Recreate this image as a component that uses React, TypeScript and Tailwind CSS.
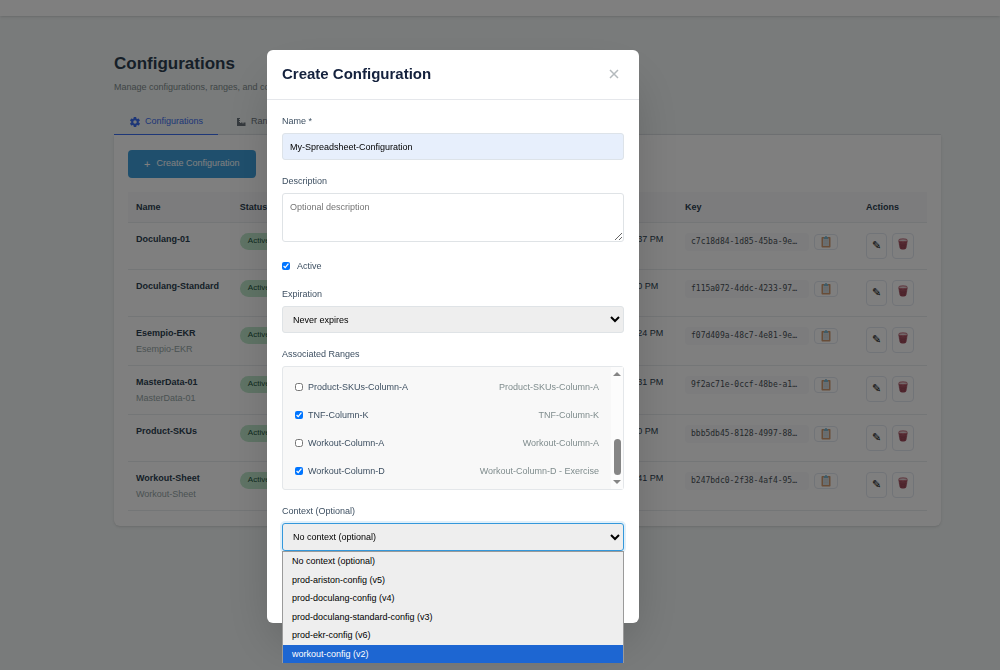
import React, { useState } from 'react';

type Config = {
  name: string;
  description?: string;
  created: string;
  apiKey: string;
};

type Range = {
  name: string;
  description: string;
};

const configs: Config[] = [
  { name: 'Doculang-01', created: '11/10/2025, 12:37 PM', apiKey: 'c7c18d84-1d85-45ba-9e…' },
  { name: 'Doculang-Standard', created: '11/10/2025, 2:30 PM', apiKey: 'f115a072-4ddc-4233-97…' },
  { name: 'Esempio-EKR', description: 'Esempio-EKR', created: '11/10/2025, 12:24 PM', apiKey: 'f07d409a-48c7-4e81-9e…' },
  { name: 'MasterData-01', description: 'MasterData-01', created: '11/10/2025, 12:31 PM', apiKey: '9f2ac71e-0ccf-48be-a1…' },
  { name: 'Product-SKUs', created: '11/10/2025, 3:10 PM', apiKey: 'bbb5db45-8128-4997-88…' },
  { name: 'Workout-Sheet', description: 'Workout-Sheet', created: '11/10/2025, 12:41 PM', apiKey: 'b247bdc0-2f38-4af4-95…' },
];

const ranges: Range[] = [
  { name: 'Product-SKUs-Column-A', description: 'Product-SKUs-Column-A' },
  { name: 'TNF-Column-K', description: 'TNF-Column-K' },
  { name: 'Workout-Column-A', description: 'Workout-Column-A' },
  { name: 'Workout-Column-D', description: 'Workout-Column-D - Exercise' },
];

const contexts = [
  'No context (optional)',
  'prod-ariston-config (v5)',
  'prod-doculang-config (v4)',
  'prod-doculang-standard-config (v3)',
  'prod-ekr-config (v6)',
  'workout-config (v2)',
];

const Icons = {
  Gear: () => (
    <svg viewBox="0 0 24 24" className="size-3" fill="currentColor">
      <path d="M19.4 13c.1-.3.1-.7.1-1s0-.7-.1-1l2.100-1.600c.2-.2.3-.4.1-.7l-2-3.400c-.1-.2-.4-.3-.6-.2l-2.500 1c-.5-.4-1.100-.7-1.700-1l-.4-2.600c0-.3-.2-.5-.5-.5h-4c-.2 0-.4.2-.5.4l-.4 2.700c-.6.200-1.100.6-1.700 1l-2.500-1c-.2-.1-.5 0-.6.2l-2 3.400c-.1.2-.1.5.1.7L4.500 11c0 .3-.1.700-.1 1s0 .700.1 1l-2.100 1.700c-.2.2-.3.4-.1.6l2 3.500c.1.2.4.3.6.2l2.500-1c.5.4 1.100.7 1.700 1l.4 2.600c0 .3.2.400.5.400h4c.2 0 .5-.2.5-.4l.4-2.600c.6-.3 1.200-.6 1.700-1l2.500 1c.2.1.5 0 .6-.2l2-3.500c.1-.2.1-.5-.1-.6L19.400 13ZM12 15.500a3.500 3.500 0 1 1 0-7 3.500 3.500 0 0 1 0 7Z" />
    </svg>
  ),
  Ruler: () => (
    <svg viewBox="0 0 24 24" className="size-3" fill="currentColor">
      <path d="M4 4h6v2H8v2h2v2H8v2h2v2h2v-1h2v2h1v-2h2v2h1v-2h3v7H4z" />
    </svg>
  ),
  Clipboard: () => (
    <svg viewBox="0 0 20 24" className="h-3 w-2.5">
      <rect x="1" y="2" width="18" height="21" rx="1.500" fill="#d19a70" />
      <rect x="4" y="5" width="12" height="15" fill="#d5dde1" />
      <path d="M6 2h2a2 2 0 0 1 4 0h2v4H6z" fill="#7fb6cf" />
      <path d="M6 9h8M6 12h8M6 15h8" stroke="#c8d2d7" />
    </svg>
  ),
  Trash: () => (
    <svg viewBox="0 0 20 24" className="h-3 w-2.5" fill="none">
      <path d="M1.500 6 4 20.500c.5 2.500 11.500 2.500 12 0L18.500 6c-3 3-14 3-17 0Z" fill="#b05a6a" stroke="#94384a" />
      <path d="m5.500 9 1.500 13M10 9v13m4.500-13L13 22M3 13c3 2 11 2 14 0M4 17c3 2 9 2 12 0" stroke="#803444" strokeWidth=".8" />
      <ellipse cx="10" cy="4.500" rx="8.700" ry="2.800" fill="#e4d3d7" stroke="#b0475a" strokeWidth="1.500" />
    </svg>
  ),
  Close: () => (
    <svg viewBox="0 0 10 10" className="size-2.5" fill="none" stroke="currentColor" strokeWidth="1.500">
      <path d="m1 1 8 8M9 1 1 9" />
    </svg>
  ),
};

const ConfigTable = () => (
  <table className="mt-[14px] w-full table-fixed border-collapse text-left text-[9px] leading-[14px] text-[#2c3e50]">
    <thead>
      <tr className="h-[30px] border-b border-[#e9ecef] bg-[#f8f9fa]">
        <th className="w-[13%] px-2 font-bold">Name</th>
        <th className="w-[42%] px-2 font-bold">Status</th>
        <th className="px-2 font-bold">Created</th>
        <th className="w-[181px] px-2 font-bold">Key</th>
        <th className="w-[69px] px-2 font-bold">Actions</th>
      </tr>
    </thead>
    <tbody>
      {configs.map(config => (
        <tr key={config.name} className={`border-b border-[#e9ecef] align-top ${config.description ? 'h-[49px]' : 'h-[47px]'}`}>
          <td className="px-2 pt-[9px]">
            <p className="whitespace-nowrap font-bold">{config.name}</p>
            {config.description && <p className="mt-0.5 text-[#95a5a6]">{config.description}</p>}
          </td>
          <td className="px-2 pt-[10px]">
            <span className="flex h-[17px] w-fit items-center rounded-full bg-[#bfe8cc] px-2 text-[8px] text-[#22543d]">Active</span>
          </td>
          <td className="whitespace-nowrap px-2 pt-[9px]">{config.created}</td>
          <td className="px-2 pt-[10px]">
            <div className="flex items-center gap-[5px]">
              <code className="h-[18px] flex-1 rounded-sm bg-[#f8f9fa] px-1.5 font-['DejaVu_Sans_Mono',monospace] text-[8px] leading-[18px] text-[#495057]">{config.apiKey}</code>
              <button aria-label="Copy key" className="mr-3 flex h-4 w-6 shrink-0 items-center justify-center rounded-sm border border-[#e2e8f0]">
                <Icons.Clipboard />
              </button>
            </div>
          </td>
          <td className="px-2 pt-[10px]">
            <div className="flex gap-[5px]">
              <button aria-label="Edit" className="h-[26px] w-[21px] shrink-0 rounded-sm border border-[#e2e8f0] font-['DejaVu_Sans',sans-serif] text-[11px] text-black">✎</button>
              <button aria-label="Delete" className="flex h-[26px] w-[22px] shrink-0 justify-center rounded-sm border border-[#e2e8f0] pt-1">
                <Icons.Trash />
              </button>
            </div>
          </td>
        </tr>
      ))}
    </tbody>
  </table>
);

const App: React.FC = () => {
  const [name, setName] = useState('My-Spreadsheet-Configuration');
  const [active, setActive] = useState(true);
  const [selected, setSelected] = useState<string[]>(['TNF-Column-K', 'Workout-Column-D']);
  const [context, setContext] = useState(contexts[0]);

  const toggleRange = (range: string) => {
    setSelected(prev => prev.includes(range) ? prev.filter(r => r !== range) : [...prev, range]);
  };

  return (
    <div className="relative min-h-screen bg-[#f2f6f6] font-['Liberation_Sans',Arial,sans-serif]">
      <header className="h-4 bg-white shadow-sm" />

      <main className="pr-[59px] pl-[114px] pt-[37px] pb-10">
        <h1 className="text-[17px] leading-[22px] font-bold text-[#2c3e50]">Configurations</h1>
        <p className="mt-[5px] text-[9px] leading-[14px] text-[#7f8c8d]">Manage configurations, ranges, and contexts</p>

        <nav className="mt-4 flex border-b border-[#dee2e6] text-[9px]">
          <button className="-mb-px flex h-[25px] items-center gap-1 border-b border-[#3d6ff0] px-[15px] text-[#3d6ff0]">
            <Icons.Gear /> Configurations
          </button>
          <button className="flex h-6 items-center gap-1 px-[17px] text-[#6c757d]">
            <Icons.Ruler /> Ranges
          </button>
        </nav>

        <section className="rounded-b-md bg-white px-[14px] pt-[15px] pb-[15px] shadow-sm">
          <button className="flex h-7 items-center gap-1.5 rounded bg-[#3f9fdb] px-4 text-[9px] text-white">
            <span className="text-[11px]">+</span> Create Configuration
          </button>
          <ConfigTable />
        </section>
      </main>

      {/* Overlay */}
      <div className="fixed inset-0 flex items-start justify-center bg-black/50 pt-[50px] pr-[94px]">
        <div role="dialog" aria-labelledby="dialog-title" className="w-[372px] rounded-md bg-white shadow-2xl">
          <div className="flex h-[50px] items-center justify-between border-b border-[#e5e7eb] px-[15px] pb-px">
            <h2 id="dialog-title" className="text-[15px] font-bold text-[#14213d]">Create Configuration</h2>
            <button aria-label="Close" className="mr-[5px] text-[#b4babd]"><Icons.Close /></button>
          </div>

          <form className="flex flex-col gap-[14px] px-[15px] pt-[14px] pb-[72px] text-[9px] leading-[14px] text-[#3d4f61]">
            <div className="flex flex-col gap-[5px]">
              <label htmlFor="name">Name *</label>
              <input
                id="name"
                value={name}
                onChange={e => setName(e.target.value)}
                className="h-[27px] rounded-[3px] border border-[#dde3e9] bg-[#e7effc] px-[7px] text-black"
              />
            </div>

            <div className="flex flex-col gap-[5px]">
              <label htmlFor="description">Description</label>
              <textarea
                id="description"
                placeholder="Optional description"
                className="h-[49px] resize rounded-[3px] border border-[#dfe3e6] px-[7px] py-1.5 placeholder:text-[#757575]"
              />
            </div>

            <label className="mt-[3px] flex items-center gap-[7px]">
              <input type="checkbox" className="size-2" checked={active} onChange={e => setActive(e.target.checked)} />
              Active
            </label>

            <div className="flex flex-col gap-[5px]">
              <label htmlFor="expiration">Expiration</label>
              <select id="expiration" className="h-[27px] rounded-[3px] border border-[#dfe3e6] bg-[#eee] px-1.5 text-black">
                <option>Never expires</option>
              </select>
            </div>

            <fieldset>
              <legend>Associated Ranges</legend>
              <div className="mt-[5px] flex h-[124px] rounded-[3px] border border-[#e4e7ea] bg-[#f8f8f8]">
                <div className="flex-1 px-3 pt-1.5">
                  {ranges.map(range => (
                    <label key={range.name} className="flex h-7 items-center gap-[5px]">
                      <input
                        type="checkbox"
                        className="size-2"
                        checked={selected.includes(range.name)}
                        onChange={() => toggleRange(range.name)}
                      />
                      {range.name}
                      <span className="ml-auto text-[#7f8c8d]">{range.description}</span>
                    </label>
                  ))}
                </div>
                <div className="flex w-3 flex-col items-center bg-[#fcfcfc] py-[5px] text-[#858585]">
                  <svg viewBox="0 0 8 4" className="h-1 w-2" fill="currentColor"><path d="M0 4 4 0l4 4z" /></svg>
                  <div className="mt-auto mb-[5px] h-9 w-[7px] rounded-full bg-[#858585]" />
                  <svg viewBox="0 0 8 4" className="h-1 w-2" fill="currentColor"><path d="m0 0 4 4 4-4z" /></svg>
                </div>
              </div>
            </fieldset>

            <div className="relative flex flex-col gap-[5px]">
              <label htmlFor="context">Context (Optional)</label>
              <select
                id="context"
                value={context}
                onChange={e => setContext(e.target.value)}
                className="h-7 rounded-[3px] border border-[#3498db] bg-[#eee] px-1.5 text-black ring-2 ring-[#3498db]/15"
              >
                {contexts.map(c => <option key={c}>{c}</option>)}
              </select>
              <ul role="listbox" aria-label="Context" className="absolute inset-x-0 top-full grid h-28 grid-rows-6 border border-b-0 border-[#9a9a9a] bg-[#eee] text-black">
                {contexts.map(c => (
                  <li
                    key={c}
                    role="option"
                    aria-selected={c === 'workout-config (v2)'}
                    onClick={() => setContext(c)}
                    className="flex items-center px-[9px] aria-selected:bg-[#1d66d2] aria-selected:text-white"
                  >
                    {c}
                  </li>
                ))}
              </ul>
            </div>
          </form>
        </div>
      </div>
    </div>
  );
};

export default App;
